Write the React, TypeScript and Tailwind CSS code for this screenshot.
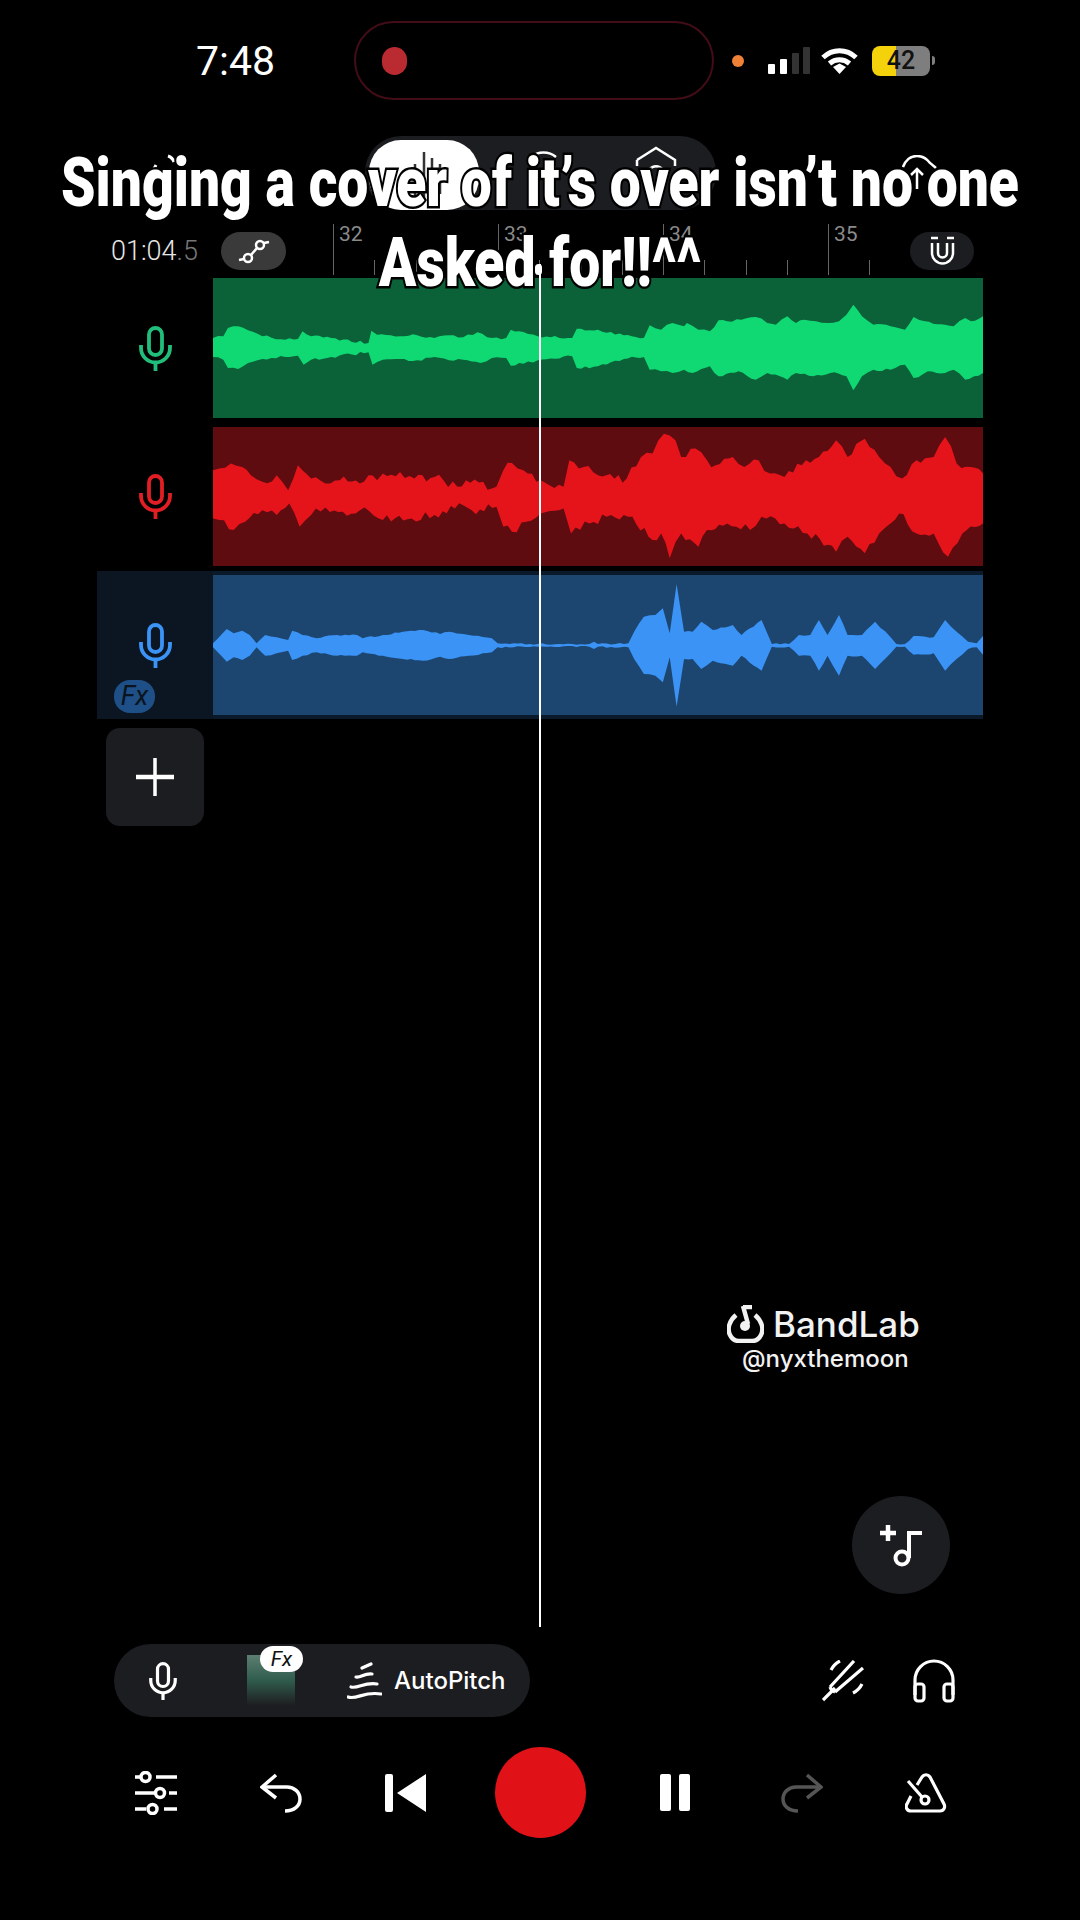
const greenTop = "214,205 232,200 240,175 258,170 275,182 300,200 340,210 362,208 370,185 385,200 420,205 485,220 490,183 500,195 540,200 570,197 600,205 625,197 650,203 675,188 700,205 725,205 733,180 755,187 780,200 840,205 848,177 885,180 930,197 965,205 975,167 995,180 1015,160 1035,170 1040,160 1060,180 1080,185 1095,152 1110,155 1135,150 1160,142 1180,160 1195,165 1215,140 1230,160 1245,150 1265,155 1285,160 1305,155 1318,135 1330,105 1345,140 1365,165 1395,170 1420,180 1435,142 1455,155 1490,165 1505,170 1525,145 1535,155 1556,140"
const greenBottom = "1556,310 1525,330 1505,300 1490,310 1460,305 1435,325 1420,285 1395,300 1365,300 1345,320 1330,362 1318,320 1290,310 1260,320 1230,310 1215,330 1180,310 1160,330 1130,305 1095,320 1080,290 1050,310 1035,300 1015,310 995,305 975,300 965,262 930,268 885,290 848,295 840,260 780,272 755,282 733,288 725,265 700,265 680,280 650,270 625,272 600,262 570,272 540,268 510,270 492,285 485,248 420,262 385,270 372,285 362,258 340,262 300,268 275,280 258,298 240,295 232,270 214,262"
const redTop = "214,600 225,595 245,580 265,590 280,615 300,635 325,615 345,660 362,585 385,625 410,640 435,630 470,640 485,615 500,630 510,610 540,605 565,625 600,620 640,650 655,630 700,655 708,650 720,600 735,578 755,600 785,630 825,650 835,570 860,590 885,615 935,625 960,560 980,550 1000,490 1020,510 1030,560 1055,535 1075,570 1090,585 1120,560 1140,590 1165,570 1185,610 1210,620 1240,585 1270,560 1300,510 1320,560 1350,505 1375,560 1395,590 1415,625 1440,570 1470,560 1490,500 1510,580 1535,590 1556,610"
const redBottom = "1556,760 1520,790 1495,860 1470,790 1440,790 1410,730 1375,790 1350,850 1320,800 1300,845 1250,790 1210,760 1170,740 1150,780 1110,760 1075,780 1060,830 1030,790 1010,865 995,790 980,810 945,740 900,740 870,760 838,790 825,715 785,730 760,755 735,785 720,770 708,710 665,720 650,705 600,735 560,745 510,750 470,720 440,725 410,712 385,735 365,770 347,700 325,735 300,720 270,755 250,780 225,750 214,745"
const blueTop = "214,250 238,207 250,220 265,212 278,225 290,250 305,225 325,232 345,240 352,212 370,225 395,235 430,225 465,225 475,235 510,225 545,215 580,210 610,222 625,215 660,225 700,235 710,250 780,252 870,252 878,245 885,252 938,250 948,215 965,170 985,165 998,145 1010,220 1022,72 1035,215 1050,215 1065,185 1085,210 1120,195 1135,225 1170,180 1180,220 1188,252 1218,252 1235,225 1255,225 1270,180 1285,225 1305,165 1320,225 1345,225 1368,185 1395,232 1405,252 1420,252 1435,228 1470,232 1490,180 1510,215 1530,245 1545,250 1556,228"
// blue clip is close to symmetric so the lower edge is just mirrored
const blueBottom = blueTop
    .split(" ")
    .reverse()
    .map((p) => {
        const [x, y] = p.split(",").map(Number)
        return `${x},${512 - y}`
    })
    .join(" ")

// adds the fine jagged edge between the hand-read envelope points
function roughen(line: string, amount: number) {
    const pts = line.split(" ").map((p) => p.split(",").map(Number))
    const out: string[] = []
    pts.forEach((p, i) => {
        out.push(`${p[0]},${p[1]}`)
        const next = pts[i + 1]
        if (!next) return
        const steps = Math.floor(Math.abs(next[0] - p[0]) / 7)
        for (let s = 1; s < steps; s++) {
            const t = s / steps
            const x = p[0] + (next[0] - p[0]) * t
            const y = p[1] + (next[1] - p[1]) * t
            const n = Math.sin(x * 12.9898 + p[1] * 0.7) * 43758.5453
            out.push(`${x.toFixed(1)},${(y + (n - Math.floor(n) - 0.5) * amount).toFixed(1)}`)
        }
    })
    return out.join(" ")
}

function Wave({ box, top, bottom, color, amount }: { box: string; top: string; bottom: string; color: string; amount: number }) {
    return (
        <svg viewBox={box} preserveAspectRatio="none" className="w-full h-full block">
            <polygon points={`${roughen(top, amount)} ${roughen(bottom, amount)}`} fill={color} />
        </svg>
    )
}

function Mic({ color, className }: { color: string; className: string }) {
    return (
        <svg viewBox="0 0 33 45" className={className} fill="none" stroke={color} strokeWidth="3.8">
            <rect x="10" y="2" width="13" height="27" rx="6.5" />
            <path d="M2 19v3a14.500 14.500 0 0 0 29 0v-3" />
            <path d="M16.500 37v8" />
        </svg>
    )
}

function StatusBar() {
    return (
        <div className="flex items-center h-[79px] mt-[21px] pl-[196px] shrink-0">
            <div className="w-[158px] text-[41px] leading-[48px] text-white font-['Roboto',sans-serif]">7:48</div>
            <div className="w-[360px] h-[79px] rounded-[40px] border-2 border-[#420d16] flex items-center pl-[26px]">
                <div className="w-[25px] h-[28px] rounded-full bg-[#b92b30]" />
            </div>
            <div className="w-[12px] h-[12px] rounded-full bg-[#f08238] ml-[18px]" />
            <svg viewBox="0 0 44 28" className="w-[44px] h-[28px] ml-[24px]">
                <rect x="0" y="17" width="7" height="10" rx="1" fill="#fff" />
                <rect x="12" y="12" width="7" height="15" rx="1" fill="#fff" />
                <rect x="24" y="6" width="7" height="21" rx="1" fill="#333" />
                <rect x="35" y="0" width="7" height="27" rx="1" fill="#333" />
            </svg>
            <svg viewBox="0 0 37 27" className="w-[37px] h-[27px] ml-[9px]" fill="none" stroke="#fff" strokeWidth="5">
                <path d="M2 10.500C11.500 1.500 25.500 1.500 35 10.500" />
                <path d="M8.500 16.500c5.800-5 14.200-5 20 0" />
                <path d="M12 20l6.500-3.500L25 20l-6.500 7z" fill="#fff" stroke="none" />
            </svg>
            <div className="relative w-[58px] h-[30px] ml-[14px] flex">
                <div className="w-[24px] rounded-l-[8px] bg-[#f3d20c]" />
                <div className="flex-1 rounded-r-[8px] bg-[#7e7e7e]" />
                <div className="absolute inset-0 flex items-center justify-center text-[25px] leading-[30px] font-medium text-[#111] font-['Roboto',sans-serif]">42</div>
            </div>
            <div className="w-[3px] h-[9px] rounded-r-full bg-[#7e7e7e] ml-[2px]" />
        </div>
    )
}

function Tabs() {
    return (
        <div className="flex items-start h-[74px] mt-[36px] pl-[148px] shrink-0">
            <svg viewBox="0 0 30 30" className="w-[30px] h-[30px] mt-[17px]" fill="none" stroke="#fff" strokeWidth="3">
                <path d="M20 3c3 1 5 3 6 6" />
                <path d="M8 12l-3 6" />
            </svg>
            <div className="w-[351px] h-[74px] ml-[187px] rounded-[36px] bg-[#1c1d20] flex p-[4px] pr-0">
                <div className="w-[110px] h-[70px] rounded-[32px] bg-white flex items-end justify-center pb-[8px]">
                    <svg viewBox="0 0 38 52" className="w-[38px] h-[52px]" stroke="#333" strokeWidth="2.5">
                        <path d="M3 22v24M10 14v34M19 2v48M27 8v42M35 14v30" />
                    </svg>
                </div>
                <div className="w-[130px] flex justify-center pt-[7px]">
                    <svg viewBox="0 0 30 30" className="w-[30px] h-[30px]" fill="none" stroke="#fff" strokeWidth="2.5">
                        <path d="M2 10c7-6 18-6 25 0" />
                        <path d="M22 12l4 10" />
                    </svg>
                </div>
                <div className="w-[100px] pt-[6px]">
                    <svg viewBox="0 0 42 30" className="w-[42px] h-[30px] ml-[26px]" fill="none" stroke="#fff" strokeWidth="2.5">
                        <path d="M2 14L21 2l19 12v6" />
                        <path d="M2 14v6" />
                        <path d="M14 24c4-5 10-5 14 0" />
                    </svg>
                </div>
            </div>
            <svg viewBox="0 0 36 36" className="w-[36px] h-[36px] ml-[186px] mt-[19px]" fill="none" stroke="#fff" strokeWidth="2.5">
                <path d="M1 12C4 4 9 1 15 1c6 0 10 3 13 7l6 5" />
                <path d="M15 34V14M9 20l6-6 6 6" />
            </svg>
        </div>
    )
}

function Ruler() {
    const ticks = [
        "32", "", "", "",
        "33", "", "", "",
        "34", "", "", "",
        "35", "",
    ]
    return (
        <div className="flex items-center h-[54px] mt-[14px] pl-[111px] shrink-0 font-['Roboto',sans-serif]">
            <div className="w-[110px] text-[27px] leading-none font-light text-[#e6e6e6]">
                01:04<span className="text-[#777]">.5</span>
            </div>
            <div className="w-[65px] h-[38px] rounded-full bg-[#3a3a3a] flex items-center justify-center">
                <svg viewBox="0 0 32 28" className="w-[32px] h-[28px]" fill="none" stroke="#fff" strokeWidth="2.5">
                    <circle cx="10" cy="21" r="4" />
                    <circle cx="22" cy="8" r="4" />
                    <path d="M13 18l6-7M1 23l5-1M26 6l5-1" />
                </svg>
            </div>
            <div className="flex items-end h-[54px] ml-[47px] w-[577px] pb-[3px]">
                {ticks.map((t, i) => (
                    <div key={i} className="w-[41.25px] h-full flex items-end shrink-0">
                        {i % 4 === 0 ? (
                            <div className="h-full border-l border-[#666] pl-[5px] text-[21px] leading-[21px] text-[#8a8a8a]">{t}</div>
                        ) : (
                            <div className="h-[15px] border-l border-[#666]" />
                        )}
                    </div>
                ))}
            </div>
            <div className="w-[64px] h-[38px] rounded-full bg-[#1c1d20] flex items-center justify-center ml-0">
                <svg viewBox="0 0 25 30" className="w-[25px] h-[30px]" fill="none" stroke="#fff" strokeWidth="2.5">
                    <path d="M1 2h7M17 2h7" />
                    <path d="M2 7v10a10.500 10.500 0 0 0 21 0V7" />
                    <path d="M8 7v10a4.500 4.500 0 0 0 9 0V7" />
                </svg>
            </div>
        </div>
    )
}

function Tracks() {
    return (
        <div className="pl-[97px] shrink-0">
            <div className="flex h-[140px]">
                <div className="w-[116px] flex items-center justify-center">
                    <Mic color="#20bd7b" className="w-[33px] h-[45px]" />
                </div>
                <div className="w-[770px] bg-[#0b6138]">
                    <Wave box="214 25 1342 420" top={greenTop} bottom={greenBottom} color="#10d873" amount={9} />
                </div>
            </div>
            <div className="flex h-[139px] mt-[9px]">
                <div className="w-[116px] flex items-center justify-center">
                    <Mic color="#e01e24" className="w-[33px] h-[45px]" />
                </div>
                <div className="w-[770px] bg-[#5e0c10]">
                    <Wave box="214 470 1342 418" top={redTop} bottom={redBottom} color="#e5141a" amount={28} />
                </div>
            </div>
            <div className="relative flex h-[148px] w-[886px] mt-[5px] bg-[#0b1a2b] py-[4px]">
                <div className="w-[116px] bg-[#0b1622] -my-[4px] flex items-center justify-center">
                    <Mic color="#3a93f5" className="w-[33px] h-[45px]" />
                </div>
                <div className="w-[770px] bg-[#1c4670]">
                    <Wave box="214 45 1342 420" top={blueTop} bottom={blueBottom} color="#3a93f5" amount={5} />
                </div>
                <div className="absolute left-[17px] top-[109px] w-[41px] h-[33px] rounded-[16px] bg-[#1f4f87] flex items-center justify-center text-[27px] leading-none italic text-[#0a1420] font-['Roboto',sans-serif]">
                    Fx
                </div>
            </div>
            <div className="w-[98px] h-[98px] ml-[9px] mt-[9px] rounded-[14px] bg-[#1c1d20] flex items-center justify-center">
                <svg viewBox="0 0 38 38" className="w-[38px] h-[38px]" stroke="#fff">
                    <path d="M19 0v38" strokeWidth="3.500" />
                    <path d="M0 19h38" strokeWidth="4.500" />
                </svg>
            </div>
        </div>
    )
}

function Watermark() {
    return (
        <div className="ml-[727px] mt-[479px] w-[200px] h-[70px] shrink-0 text-[#f2f2f2] font-['Inter',sans-serif]">
            <div className="flex items-center h-[38px]">
                <svg viewBox="0 0 37 38" className="w-[37px] h-[38px]" fill="none" stroke="#f2f2f2" strokeWidth="4.500">
                    <path d="M9 10C2 16 0 24 3 30c1.500 3 4 6 9 6h13c5 0 7.500-3 9-6 3-6 1-14-6-20" />
                    <path d="M16 1l5 18M16 2h9" />
                    <circle cx="18" cy="21" r="5" fill="#f2f2f2" stroke="none" />
                </svg>
                <div className="ml-[9px] text-[35px] leading-none font-medium">BandLab</div>
            </div>
            <div className="ml-[15px] mt-[3px] text-[24px] leading-[26px] font-medium">@nyxthemoon</div>
        </div>
    )
}

function Bottom() {
    return (
        <div className="shrink-0">
            <div className="ml-[852px] mt-[121px] w-[98px] h-[98px] rounded-full bg-[#1c1d20]">
                <svg viewBox="0 0 98 98" className="w-[98px] h-[98px]" fill="none" stroke="#fff">
                    <path d="M28 37h16M36 29v16" strokeWidth="4.500" />
                    <circle cx="50" cy="62" r="6.500" strokeWidth="4" />
                    <path d="M57 62V37h13" strokeWidth="4" />
                </svg>
            </div>
            <div className="flex items-center mt-[50px] pl-[114px]">
                <div className="relative w-[416px] h-[73px] rounded-full bg-[#1c1d20] flex items-center pl-[35px]">
                    <Mic color="#fff" className="w-[28px] h-[38px]" />
                    <div className="relative w-[48px] h-[51px] ml-[70px] bg-gradient-to-b from-[#5c7f72] via-[#2f5c4d] to-[#1c1d20]">
                        <div className="absolute -top-[9px] left-[13px] w-[43px] h-[26px] rounded-full bg-white flex items-center justify-center text-[21px] leading-none italic text-[#111] font-['Roboto',sans-serif]">
                            Fx
                        </div>
                    </div>
                    <svg viewBox="0 0 35 38" className="w-[35px] h-[38px] ml-[52px]" fill="none" stroke="#fff" strokeWidth="3.200" strokeLinecap="round">
                        <path d="M15 6l9-4" />
                        <path d="M9 15c5 1 8-4 16-3" />
                        <path d="M4 25c7 2 13-5 26-3" />
                        <path d="M1 35c9 3 16-6 33-3" />
                    </svg>
                    <div className="ml-[12px] text-[24px] leading-none font-medium text-white font-['Inter',sans-serif]">AutoPitch</div>
                </div>
                <svg viewBox="0 0 42 42" className="w-[42px] h-[42px] ml-[292px]" fill="none" stroke="#fff" strokeWidth="3.200">
                    <path d="M1 40l12-12" />
                    <path d="M8 27L32 1M13 32L41 8" />
                    <path d="M8 27c1 3 2 4 5 5" />
                    <path d="M18 1c-4 2-7 5-9 9M40 24c-2 4-5 7-9 9" />
                </svg>
                <svg viewBox="0 0 42 44" className="w-[42px] h-[44px] ml-[49px]" fill="none" stroke="#fff" strokeWidth="3.200">
                    <path d="M2 36V21a19 19 0 0 1 38 0v15" />
                    <rect x="2" y="25" width="9" height="17" rx="3" />
                    <rect x="31" y="25" width="9" height="17" rx="3" />
                </svg>
            </div>
            <div className="flex items-center h-[91px] mt-[30px] pl-[93px]">
                <div className="w-[125px] flex justify-center">
                    <svg viewBox="0 0 42 44" className="w-[42px] h-[44px]" fill="none" stroke="#fff" strokeWidth="3.500">
                        <path d="M0 6h5M21 6h21M0 22h19M34 22h8M0 38h11M29 38h13" />
                        <circle cx="10.500" cy="6" r="4.500" />
                        <circle cx="25" cy="22" r="4.500" />
                        <circle cx="17.500" cy="38" r="4.500" />
                    </svg>
                </div>
                <div className="w-[125px] flex justify-center">
                    <svg viewBox="0 0 42 40" className="w-[42px] h-[40px]" fill="none" stroke="#fff" strokeWidth="3.500">
                        <path d="M16 2L2 14l14 11" />
                        <path d="M2 14h25c7 0 13 5 13 12s-6 12-15 12" />
                    </svg>
                </div>
                <div className="w-[125px] flex justify-center">
                    <svg viewBox="0 0 42 38" className="w-[42px] h-[38px]" fill="#fff">
                        <rect x="0" y="0" width="8" height="38" rx="2" />
                        <path d="M12 19L41 0v38z" />
                    </svg>
                </div>
                <div className="w-[145px] flex justify-center">
                    <div className="w-[91px] h-[91px] rounded-full bg-[#e01218]" />
                </div>
                <div className="w-[125px] flex justify-center gap-[8px] pr-[2px]">
                    <div className="w-[11px] h-[37px] rounded-[2px] bg-white" />
                    <div className="w-[11px] h-[37px] rounded-[2px] bg-white" />
                </div>
                <div className="w-[127px] flex justify-center">
                    <svg viewBox="0 0 42 40" className="w-[42px] h-[40px]" fill="none" stroke="#555" strokeWidth="3.500">
                        <path d="M26 2l14 12-14 11" />
                        <path d="M40 14H15C8 14 2 19 2 26s6 12 15 12" />
                    </svg>
                </div>
                <div className="w-[121px] flex justify-center">
                    <svg viewBox="0 0 42 40" className="w-[42px] h-[40px]" fill="none" stroke="#fff" strokeWidth="3.200">
                        <path d="M12 12l5-8c2-3 6-3 8 0l14 27c1.500 3 0 7-4 7H6c-4 0-6-4-4-7l4-8" />
                        <path d="M3 8l14 16" />
                        <circle cx="20" cy="27" r="4" />
                    </svg>
                </div>
            </div>
        </div>
    )
}

export default function App() {
    return (
        <div className="relative w-[1080px] h-[1920px] bg-black overflow-hidden flex flex-col">
            <StatusBar />
            <Tabs />
            <Ruler />
            <Tracks />
            <Watermark />
            <Bottom />

            {/* playhead */}
            <div className="absolute left-[539px] top-[264px] w-[2px] h-[1363px] bg-white">
                <div className="absolute -left-[4px] top-0 w-[7px] h-[11px] rounded-full bg-white" />
            </div>

            {/* caption burned over the video, wider than the page before the squeeze */}
            <div className="absolute -left-[160px] top-[143px] w-[1400px] text-center text-white font-black text-[69px] leading-[80px] whitespace-nowrap scale-x-[0.8] font-['Roboto',sans-serif] [-webkit-text-stroke:5px_black] [paint-order:stroke_fill]">
                <div>Singing a cover of it’s over isn’t no one</div>
                <div>Asked for!!^^</div>
            </div>
        </div>
    )
}
